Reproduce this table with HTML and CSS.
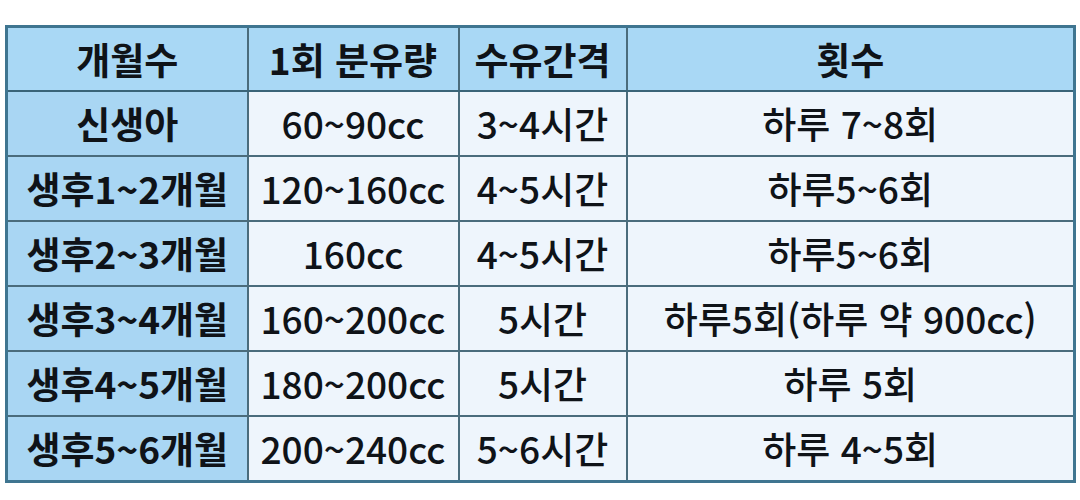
FILE: index.html
```html
<!DOCTYPE html>
<html lang="ko">
<head>
<meta charset="utf-8">
<link rel="stylesheet" href="styles.css">
</head>
<body>
<div class="wrap">
<table class="feed">
  <colgroup>
    <col class="c1"><col class="c2"><col class="c3"><col class="c4">
  </colgroup>
  <thead>
    <tr><th>개월수</th><th>1회 분유량</th><th>수유간격</th><th>횟수</th></tr>
  </thead>
  <tbody>
    <tr><th>신생아</th><td>60~90cc</td><td>3~4시간</td><td>하루 7~8회</td></tr>
    <tr><th>생후1~2개월</th><td>120~160cc</td><td>4~5시간</td><td>하루5~6회</td></tr>
    <tr><th>생후2~3개월</th><td>160cc</td><td>4~5시간</td><td>하루5~6회</td></tr>
    <tr><th>생후3~4개월</th><td>160~200cc</td><td>5시간</td><td>하루5회(하루 약 900cc)</td></tr>
    <tr><th>생후4~5개월</th><td>180~200cc</td><td>5시간</td><td>하루 5회</td></tr>
    <tr><th>생후5~6개월</th><td>200~240cc</td><td>5~6시간</td><td>하루 4~5회</td></tr>
  </tbody>
</table>
</div>
</body>
</html>
```

FILE: styles.css
```css
html, body {
  margin: 0;
  padding: 0;
  background: #ffffff;
}
.wrap {
  padding: 25px 0 0 5px;
}
.feed {
  border-collapse: collapse;
  table-layout: fixed;
  width: 1068px;
  border: 3px solid #3f7590;
  font-family: "Noto Sans CJK KR", "Noto Sans", sans-serif;
  color: #0f1318;
}
.c1 { width: 241px; }
.c2 { width: 211px; }
.c3 { width: 168px; }
.c4 { width: 448px; }
.feed th, .feed td {
  border: 2px solid #4a6c7c;
  text-align: center;
  padding: 0;
  font-size: 37px;
  line-height: 1;
  white-space: nowrap;
  letter-spacing: 0;
}
.feed thead th {
  height: 62px;
  background: #a9d8f5;
  font-weight: 700;
  border-bottom: 2px solid #3a6478;
}
.feed tbody tr { height: 65px; }
.feed tbody th {
  background: #a9d6f3;
  font-weight: 700;
}
.feed tbody td {
  background: #eef5fc;
  font-weight: 500;
}
```
